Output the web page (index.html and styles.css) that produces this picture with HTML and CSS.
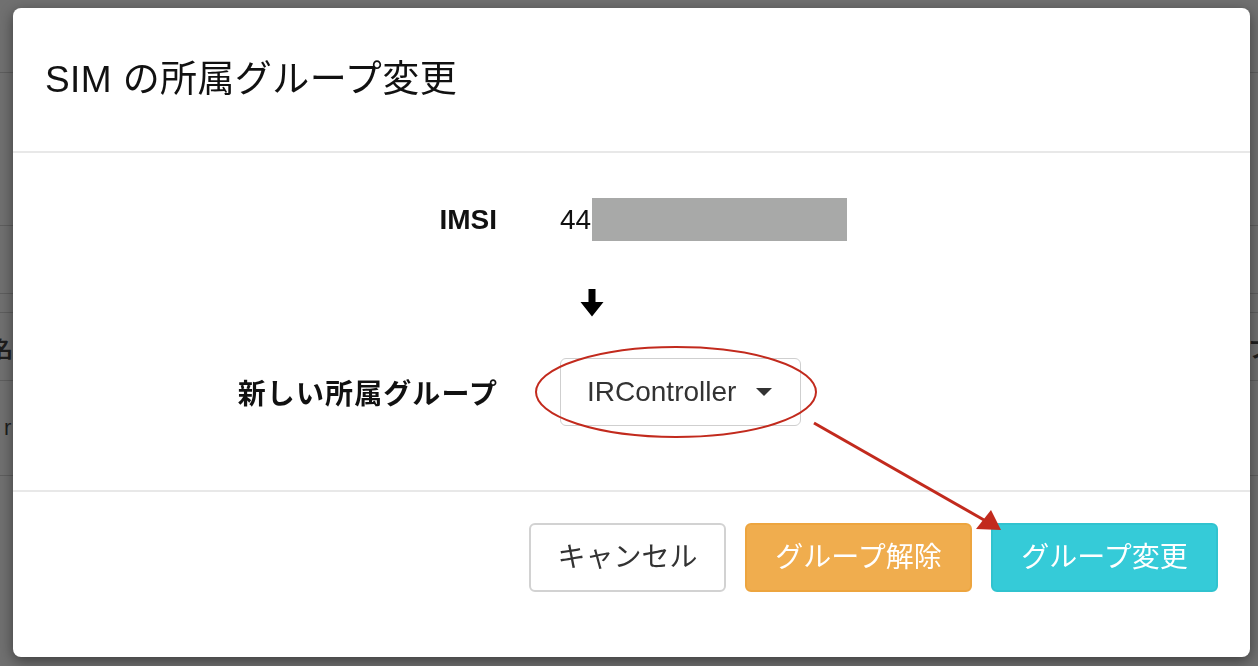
FILE: index.html
```html
<!DOCTYPE html>
<html lang="ja">
<head>
<meta charset="utf-8">
<title>SIM の所属グループ変更</title>
<link rel="stylesheet" href="styles.css">
</head>
<body>
<div class="page">
  <div class="bg-row r1"></div>
  <div class="bg-row r2"></div>
  <div class="bg-row r3"></div>
  <div class="bg-row r4"></div>
  <div class="bg-row r5"><span class="bg-text">名前</span><span class="bg-text right">フ</span></div>
  <div class="bg-row r6"><span class="bg-text thin">r</span></div>
</div>

<div class="modal">
  <div class="modal-header">
    <h1 class="modal-title">SIM の所属グループ変更</h1>
  </div>
  <div class="modal-body">
    <div class="form-row imsi-row">
      <div class="label">IMSI</div>
      <div class="value"><span>44</span><span class="masked"></span></div>
    </div>
    <div class="form-row arrow-row">
      <div class="label"></div>
      <div class="value">
        <svg class="down-arrow" width="24" height="28" viewBox="0 0 24 28">
          <path d="M8.5 0 H15.5 V13 H23.5 L12 27.5 L0.5 13 H8.5 Z" fill="#000"/>
        </svg>
      </div>
    </div>
    <div class="form-row select-row">
      <div class="label jp">新しい所属グループ</div>
      <div class="value">
        <div class="select">
          <span class="select-text">IRController</span>
          <span class="caret"></span>
        </div>
      </div>
    </div>
  </div>
  <div class="modal-footer">
    <button class="btn btn-default">キャンセル</button>
    <button class="btn btn-warning">グループ解除</button>
    <button class="btn btn-info">グループ変更</button>
  </div>
</div>

<svg class="annotation" width="1258" height="666" viewBox="0 0 1258 666">
  <ellipse cx="676" cy="392" rx="140" ry="45" fill="none" stroke="#c22a1d" stroke-width="2"/>
  <line x1="814" y1="423" x2="984" y2="520" stroke="#c22a1d" stroke-width="3"/>
  <polygon points="1001,530 976,529 991,510" fill="#c22a1d"/>
</svg>
</body>
</html>
```

FILE: styles.css
```css
html, body {
  margin: 0;
  padding: 0;
  width: 1258px;
  height: 666px;
  overflow: hidden;
}

body {
  background: #707070;
  font-family: "Liberation Sans", "Noto Sans CJK JP", sans-serif;
}

.page {
  display: flex;
  flex-direction: column;
}

.bg-row {
  border-bottom: 1px solid #5e5e5e;
  display: flex;
  align-items: center;
  justify-content: space-between;
  overflow: hidden;
}

.r1 { height: 72px; }
.r2 { height: 152px; }
.r3 { height: 67px; }
.r4 { height: 18px; }
.r5 { height: 67px; }
.r6 { height: 94px; }

.bg-text {
  font-size: 22px;
  font-weight: bold;
  color: #1e1e1e;
  margin-left: -9px;
}

.bg-text.right {
  margin-left: 0;
  margin-right: -12px;
}

.bg-text.thin {
  font-weight: normal;
  margin-left: 4px;
}

.modal {
  position: fixed;
  left: 13px;
  top: 8px;
  width: 1237px;
  height: 649px;
  background: #fff;
  border-radius: 8px;
  box-shadow: 0 4px 14px rgba(0, 0, 0, 0.45);
  display: flex;
  flex-direction: column;
  overflow: hidden;
}

.modal-header {
  height: 143px;
  padding-left: 32px;
  display: flex;
  align-items: center;
  border-bottom: 2px solid #e8e8e8;
  flex: none;
}

.modal-title {
  margin: 0;
  font-size: 37px;
  font-weight: normal;
  color: #111;
  line-height: 1;
  letter-spacing: 0.4px;
}

.modal-body {
  padding-top: 45px;
  height: 292px;
  display: flex;
  flex-direction: column;
  flex: none;
}

.form-row {
  display: grid;
  grid-template-columns: 484px 1fr;
  column-gap: 63px;
  align-items: center;
}

.label {
  text-align: right;
  font-size: 28px;
  font-weight: bold;
  color: #111;
}

.label.jp {
  letter-spacing: 1.1px;
  margin-right: -1px;
}

.value {
  font-size: 28px;
  color: #111;
  display: flex;
  align-items: center;
}

.imsi-row {
  height: 43px;
}

.masked {
  display: inline-block;
  width: 255px;
  height: 43px;
  background: #a8a9a8;
  margin-left: 1px;
}

.arrow-row {
  margin-top: 48px;
  height: 28px;
}

.down-arrow {
  display: block;
  margin-left: 20px;
}

.select-row {
  margin-top: 41px;
  height: 68px;
}

.select {
  box-sizing: border-box;
  width: 241px;
  height: 68px;
  border: 1.5px solid #cfcfcf;
  border-radius: 6px;
  display: flex;
  align-items: center;
  padding-left: 26px;
}

.select-text {
  font-size: 28px;
  color: #333;
}

.caret {
  width: 0;
  height: 0;
  margin-left: 20px;
  border-left: 8px solid transparent;
  border-right: 8px solid transparent;
  border-top: 8px solid #333;
}

.modal-footer {
  border-top: 2px solid #e8e8e8;
  padding: 31px 32px 0 0;
  display: flex;
  justify-content: flex-end;
  align-items: flex-start;
  gap: 19px;
  flex: 1;
}

.btn {
  height: 69px;
  padding: 0 26px;
  font-family: "Liberation Sans", "Noto Sans CJK JP", sans-serif;
  font-size: 28px;
  border-radius: 6px;
  border: 2px solid transparent;
  line-height: 1;
}

.btn-default {
  background: #fff;
  color: #333;
  border-color: #d2d2d2;
  width: 197px;
}

.btn-warning {
  background: #f0ad4e;
  border-color: #eda53f;
  color: #fff;
  width: 227px;
}

.btn-info {
  background: #35cbd8;
  border-color: #30c3cf;
  color: #fff;
  width: 227px;
}

.annotation {
  position: fixed;
  left: 0;
  top: 0;
  pointer-events: none;
}
```
